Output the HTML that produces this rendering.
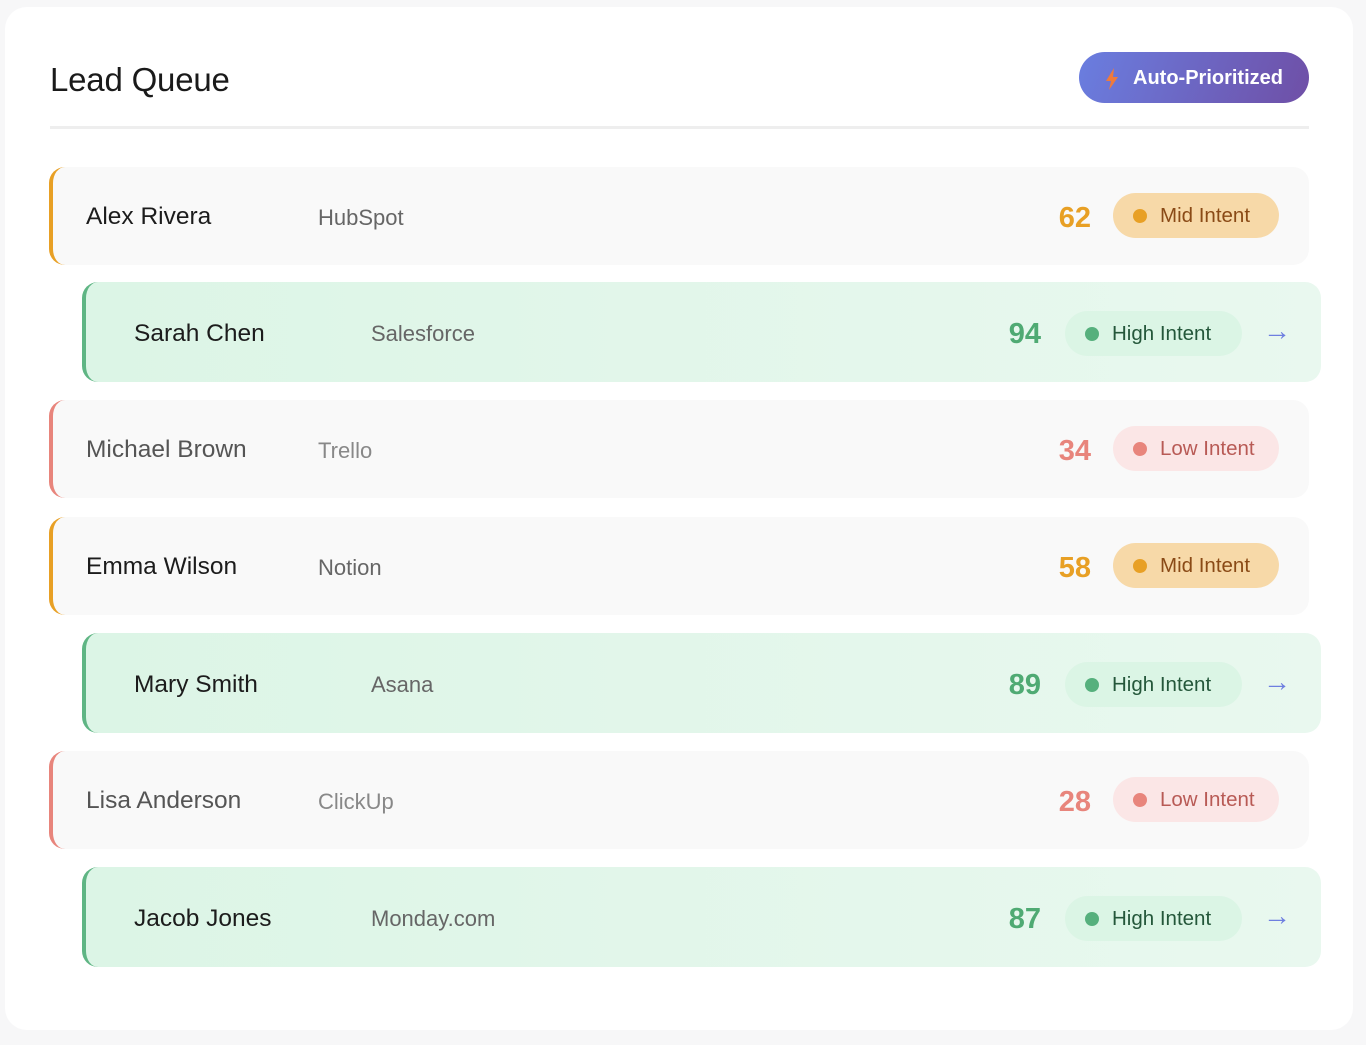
<!DOCTYPE html>
<html><head><meta charset="utf-8"><style>
*{box-sizing:border-box;margin:0;padding:0}
body{width:1366px;height:1045px;background:#f7f7f8;font-family:"Liberation Sans",sans-serif;position:relative;overflow:hidden}
.card{position:absolute;left:5px;top:7px;width:1348px;height:1023px;background:#fff;border-radius:22px}
h1{position:absolute;left:50px;top:61px;font-size:33px;font-weight:500;color:#1a1a1a;letter-spacing:-0.2px}
.btn{position:absolute;left:1079px;top:52px;width:230px;height:51px;border-radius:26px;background:linear-gradient(110deg,#6a7ee0,#6f4fa6);color:#fff;font-weight:bold;font-size:20px;display:flex;align-items:center;justify-content:center;gap:14px;padding-top:2px}
.hr{position:absolute;left:50px;top:126px;width:1259px;height:3px;background:#eeeeee}
.row{position:absolute;height:98px;border-radius:16px;background:#f9f9f9;border-left:4px solid #e8a025}
.row .n{position:absolute;left:33px;top:36px;font-size:24.5px;font-weight:500;color:#1c1c1c}
.row .c{position:absolute;left:265px;top:38px;font-size:22px;color:#666}
.row .s{position:absolute;right:218px;top:35px;font-size:29px;font-weight:bold;width:60px;text-align:right}
.row .b{position:absolute;right:30px;top:26px;width:166px;height:45px;border-radius:23px;font-size:20.5px;display:flex;align-items:center;padding-left:20px;gap:13px;padding-top:1px}
.b i{display:block;width:14px;height:14px;border-radius:50%;flex:none}
.mid{border-color:#e8a025}.mid .s{color:#e8a025}.mid .b{background:#f7d9a8;color:#8a4a16}.mid .b i{background:#e8a025}
.low{border-color:#e8857c}.low .n{color:#555}.low .c{color:#888}.low .s{color:#e8857c}.low .b{background:#fbe6e6;color:#b85a55}.low .b i{background:#e8857c}
.hi{left:82px!important;width:1239px;height:100px;border-left-color:#5fb584;background:linear-gradient(90deg,#dcf5e6,#e9f8ef)}
.hi .n{left:48px;top:38px}.hi .c{left:285px;top:39px}
.hi .s{color:#4faa73;right:280px;top:36px}
.hi .b{right:79px;top:29px;width:177px;background:#dbf5e5;color:#24573a}.hi .b i{background:#56b07d}
.hi .a{position:absolute;right:30px;top:33px;color:#6e7fe0;font-size:28px}
</style></head><body>
<div class="card"></div>
<h1>Lead Queue</h1>
<div class="btn"><svg width="14" height="22" viewBox="0 0 14 22"><path d="M9 0L1 13h5l-2 9 9-13H8z" fill="#f07a3a"/></svg>Auto-Prioritized</div>
<div class="hr"></div>

<div class="row mid" style="left:49px;top:167px;width:1260px"><div class="n">Alex Rivera</div><div class="c">HubSpot</div><div class="s">62</div><div class="b"><i></i>Mid Intent</div></div>
<div class="row hi" style="top:282px"><div class="n">Sarah Chen</div><div class="c">Salesforce</div><div class="s">94</div><div class="b"><i></i>High Intent</div><div class="a">→</div></div>
<div class="row low" style="left:49px;top:400px;width:1260px"><div class="n">Michael Brown</div><div class="c">Trello</div><div class="s">34</div><div class="b"><i></i>Low Intent</div></div>
<div class="row mid" style="left:49px;top:517px;width:1260px"><div class="n">Emma Wilson</div><div class="c">Notion</div><div class="s">58</div><div class="b"><i></i>Mid Intent</div></div>
<div class="row hi" style="top:633px"><div class="n">Mary Smith</div><div class="c">Asana</div><div class="s">89</div><div class="b"><i></i>High Intent</div><div class="a">→</div></div>
<div class="row low" style="left:49px;top:751px;width:1260px"><div class="n">Lisa Anderson</div><div class="c">ClickUp</div><div class="s">28</div><div class="b"><i></i>Low Intent</div></div>
<div class="row hi" style="top:867px"><div class="n">Jacob Jones</div><div class="c">Monday.com</div><div class="s">87</div><div class="b"><i></i>High Intent</div><div class="a">→</div></div>
</body></html>
